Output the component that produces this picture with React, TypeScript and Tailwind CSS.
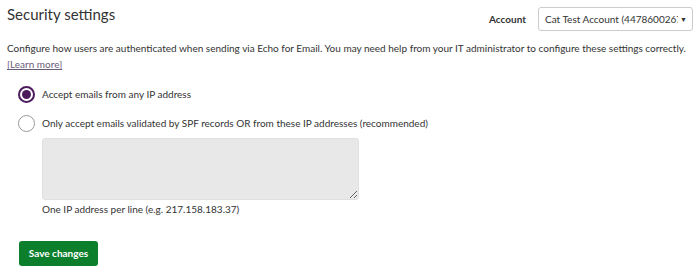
import React from 'react';

export default function App() {
  return (
    <div className="w-[700px] h-[271px] bg-white text-[#333] font-['Lato','Liberation_Sans',sans-serif] overflow-hidden">
      <div className="flex items-start justify-between pl-[7px] pr-[7px] pt-[2px]">
        <h1 className="text-[15px] leading-[24px] text-[#333]">Security settings</h1>
        <div className="flex items-center mt-[5px]">
          <span className="text-[10px] font-bold mr-[12px]">Account</span>
          <div className="flex items-center w-[155px] h-[24px] border border-[#ccc] rounded-[3px] pl-[6px] pr-[5px] text-[10px] whitespace-nowrap">
            <span className="flex-1 min-w-0 overflow-hidden">Cat Test Account (4478600267)</span>
            <span className="text-[7px] ml-[2px]">▼</span>
          </div>
        </div>
      </div>

      <p className="px-[7px] mt-[9px] text-[10px] leading-[16px]">
        Configure how users are authenticated when sending via Echo for Email. You may need help from your IT administrator to configure these settings correctly.
        <br />
        <a href="#" className="text-[#6b5b7b] underline">[Learn more]</a>
      </p>

      <div className="pl-[18px] mt-[14px] flex flex-col gap-[12px] text-[10px]">
        <label className="flex items-center gap-[7px] h-[17px]">
          <span className="w-[17px] h-[17px] rounded-full border-2 border-[#4b1b5c] flex items-center justify-center">
            <span className="w-[9px] h-[9px] rounded-full bg-[#4b1b5c]" />
          </span>
          Accept emails from any IP address
        </label>
        <label className="flex items-center gap-[7px] h-[17px]">
          <span className="w-[17px] h-[17px] rounded-full border border-[#999]" />
          Only accept emails validated by SPF records OR from these IP addresses (recommended)
        </label>
      </div>

      <div className="pl-[42px] mt-[6px]">
        <textarea className="block w-[317px] h-[62px] bg-[#e8e8e8] border border-[#e0e0e0] rounded-[3px] resize-y" />
        <div className="text-[10px] mt-[2px] leading-[14px]">One IP address per line (e.g. 217.158.183.37)</div>
      </div>

      <div className="pl-[19px] mt-[23px]">
        <button className="h-[25px] w-[79px] bg-[#0b7f2c] text-white text-[10px] font-bold rounded-[3px]">Save changes</button>
      </div>
    </div>
  );
}
